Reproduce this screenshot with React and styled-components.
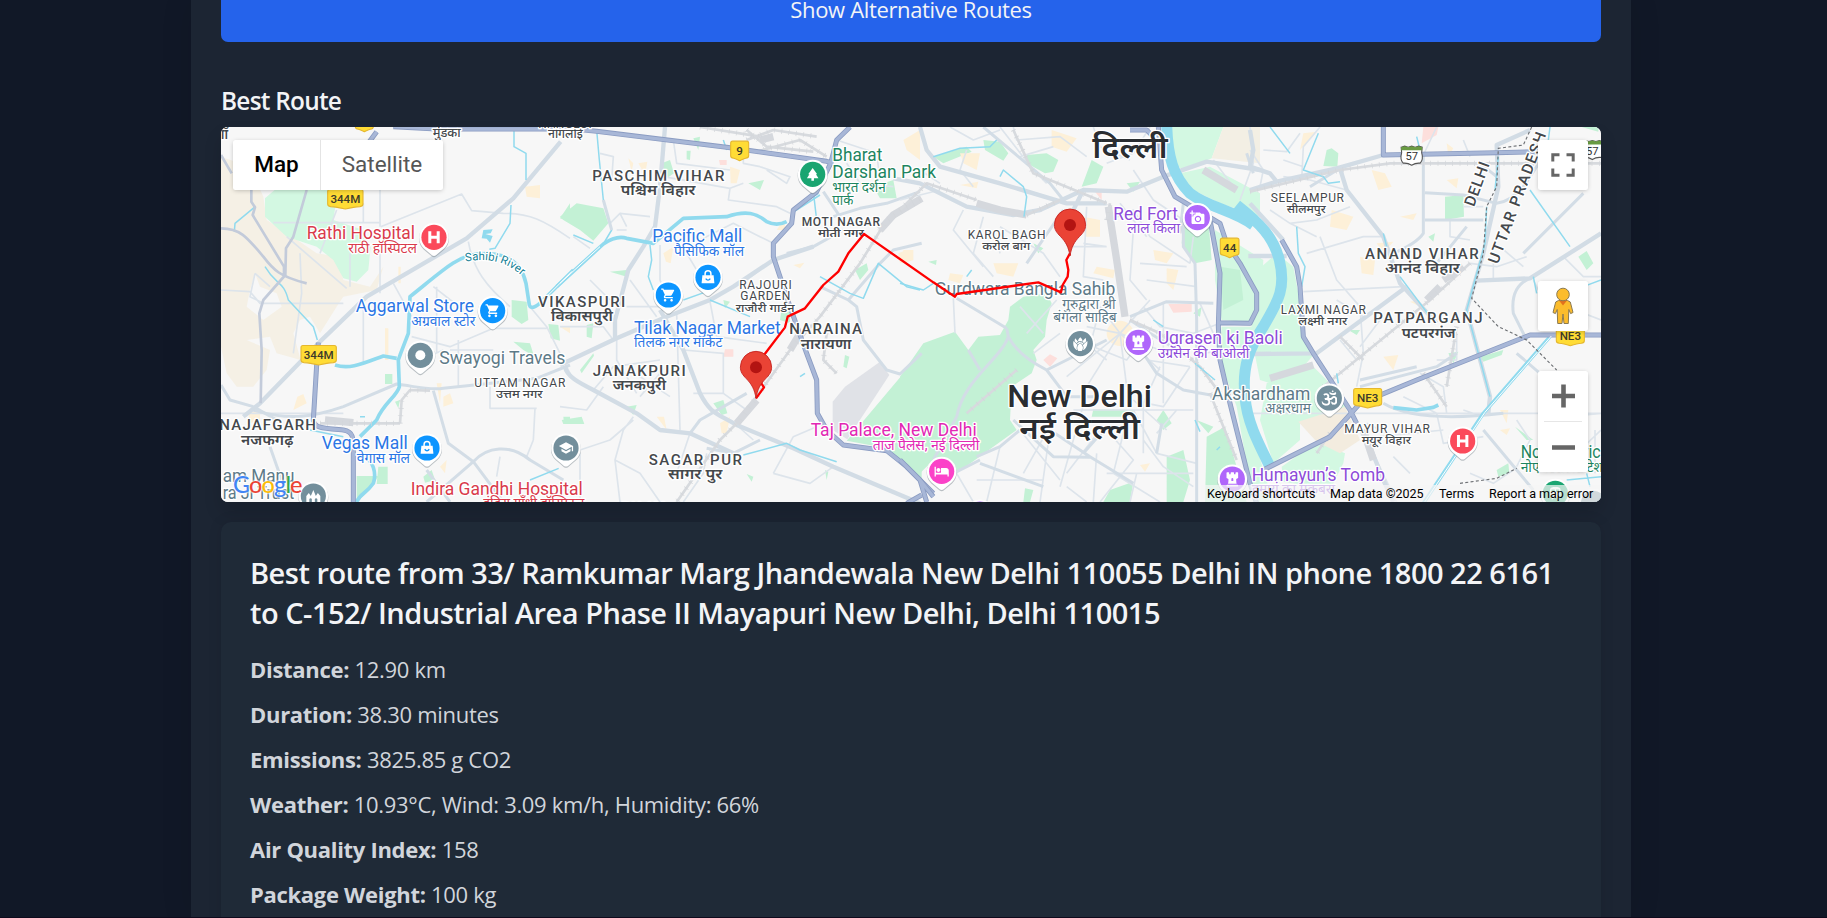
import React from 'react';
import styled, { createGlobalStyle, css } from 'styled-components';
import { MdShoppingCart, MdSchool, MdPark, MdHotel, MdAddAPhoto, MdTrain } from 'react-icons/md';
import { FaChessRook, FaOm } from 'react-icons/fa';
import { GiLotus } from 'react-icons/gi';

const GlobalStyle = createGlobalStyle`
  * { box-sizing: border-box; }
  html, body { margin: 0; padding: 0; background: #111827; }
  body { overflow: hidden; font-family: 'Open Sans', 'Noto Sans', sans-serif; }
  h2, h3, p { margin: 0; }
`;

const Page = styled.div`
  height: 918px;
  overflow: hidden;
  display: flex;
  justify-content: center;
  background: #111827;
  border-bottom: 1px solid #0e0a1c;
  padding-right: 5px;
`;

const Panel = styled.main`
  width: 1440px;
  padding: 0 30px;
  background: #1c2533;
  box-shadow: 0 0 30px rgba(0, 0, 0, 0.1);
  display: flex;
  flex-direction: column;
`;

const RouteButton = styled.button`
  flex: none;
  height: 65px;
  margin: -23px 0 40px;
  padding: 15px;
  border: 0;
  border-radius: 7px;
  background: #2563eb;
  color: #f3f4f6;
  font: 400 22px/35px 'Open Sans', sans-serif;
  letter-spacing: -0.35px;
`;

const SectionTitle = styled.h3`
  font-size: 24.4px;
  font-weight: 650;
  line-height: 35px;
  letter-spacing: -0.75px;
  color: #f3f4f6;
  padding-top: 1px;
  margin-bottom: 9px;
`;

const MapFrame = styled.section`
  position: relative;
  flex: none;
  height: 375px;
  border-radius: 7px;
  overflow: hidden;
  background: #f7f7f7;
`;

const MapShadow = styled.div`
  flex: none;
  border-radius: 7px;
  box-shadow: 0 10px 18px rgba(0, 0, 0, 0.14);
  margin-bottom: 20px;
`;

const MapArt = styled.svg`
  display: block;
  width: 1380px;
  height: 375px;
`;

const MapLabel = styled.text`
  font-family: Roboto, 'Noto Sans Devanagari', 'Noto Sans', sans-serif;
  font-size: ${(p) => p.$size}px;
  font-weight: ${(p) => p.$weight};
  fill: ${(p) => p.$color};
  stroke: #fff;
  stroke-width: 2.6px;
  stroke-linejoin: round;
  paint-order: stroke;
`;

const control = css`
  background: #fff;
  border-radius: 2.5px;
  box-shadow: 0 1px 5px -1px rgba(0, 0, 0, 0.3);
`;

const TypeSwitch = styled.div`
  ${control}
  position: absolute;
  left: 12px;
  top: 13px;
  height: 50px;
  width: 210px;
  display: flex;
`;

const TypeButton = styled.button`
  width: ${(p) => p.$width}px;
  border: 0;
  border-left: ${(p) => (p.$divided ? '1px solid #e4e4e4' : '0')};
  background: none;
  padding: 0 0 2px;
  font-family: Roboto, sans-serif;
  font-size: 22.5px;
  line-height: 48px;
  font-weight: ${(p) => (p.$active ? 500 : 400)};
  color: ${(p) => (p.$active ? '#000' : '#565656')};
`;

const ControlColumn = styled.div`
  position: absolute;
  right: 13px;
  top: 13px;
  width: 50px;
  display: flex;
  flex-direction: column;
`;

const SquareControl = styled.button`
  ${control}
  width: 50px;
  height: ${(p) => p.$height || 50}px;
  margin-bottom: ${(p) => p.$gap || 0}px;
  border: 0;
  padding: 0;
  display: flex;
  align-items: center;
  justify-content: center;
`;

const Attribution = styled.div`
  position: absolute;
  right: 0;
  bottom: 0;
  height: 17px;
  display: flex;
  gap: 15px;
  padding: 0 8px 0 6px;
  background: rgba(245, 245, 245, 0.72);
  font: 400 12.5px/17px Roboto, sans-serif;
  color: #000;
  white-space: nowrap;
`;

const AttributionItem = styled.span`
  width: ${(p) => p.$width}px;
`;

const Logo = styled.div`
  position: absolute;
  left: 12px;
  bottom: 3px;
  font: 500 23.5px/30px 'Lato', sans-serif;
  letter-spacing: -0.9px;
  text-shadow: 0 0 2px #fff, 0 0 2px #fff, 0 0 2px #fff;
`;

const LogoLetter = styled.span`
  color: ${(p) => p.$color};
`;

const Details = styled.article`
  flex: none;
  height: 480px;
  padding: 30px 29px;
  border-radius: 10px;
  background: #1f2a37;
  box-shadow: 0 0 14px rgba(0, 0, 0, 0.1);
`;

const DetailsTitle = styled.h2`
  font-size: 29px;
  font-weight: 640;
  line-height: 40px;
  letter-spacing: -0.5px;
  color: #f3f4f6;
  padding-top: 1px;
  margin-bottom: 19px;
  white-space: nowrap;
`;

const DetailRow = styled.p`
  font-size: 22px;
  line-height: 35px;
  letter-spacing: -0.32px;
  color: #d1d5db;
  margin-bottom: 10px;
  strong { font-weight: 700; letter-spacing: -0.3px; }
`;

/* Horizontal origin of each map tile, in map pixels; tile units are thirds of a pixel. */
const TILES = { a: -11, b: 339, c: 679, d: 1029 };
const px = (tile, x) => TILES[tile] + x / 3;
const py = (y) => -7 + y / 3;

const KINDS = {
  water: ['#90daee', 11],
  river: ['#90daee', 33],
  creek: ['#90daee', 4.5],
  lane: ['#dde4eb', 5],
  road: ['#d3dde6', 9],
  avenue: ['#d2dce5', 13],
  rail: ['#d7dade', 8],
  railwide: ['#d5d8dd', 22],
  minor: ['#c3cbda', 8],
};

const AREAS = [
  ['a', '#f5f0e5', 'M33,110L120,140 160,230 170,300 240,345 320,400 385,410 400,480 480,500 520,440 500,510 400,530 380,560 330,640 300,590 270,600 250,640 272,720 200,700 180,650 110,660 180,690 170,750 130,800 80,800 50,760 33,680Z'],
  ['a', '#f7f7f7', 'M135,460L150,500 200,520 215,560 160,600 110,560 120,510Z'],
  ['a', '#d3f8e2', 'M165,235L200,205H360L380,235 370,300 460,330 482,380 475,450 440,485 400,475 370,420 320,380 230,350 165,290Z'],
  ['a', '#c3f1d5', 'M905,540L950,545 955,600 935,612 905,590ZM1015,612L1045,615 1050,662 1022,655ZM910,665L960,670 972,708 940,690ZM525,762H547V792H525ZM1050,295L1080,250V305ZM505,1040H533V1092H500ZM440,1068H505L480,1110 440,1146ZM640,1070L665,1050 675,1080 645,1088ZM1060,890H1080V910H1062ZM555,845L570,840 565,865Z'],
  ['a', '#fdf0d8', 'M945,200L990,195V235L950,230ZM262,830L280,822 290,850 250,870ZM610,715L650,700 655,735 615,745ZM700,830L720,820 730,850 700,860ZM525,625H535V720H525ZM690,1040L710,1020 705,1060ZM115,880L150,870 150,900 120,910ZM565,440H572V490H565ZM680,790L695,790 690,850Z'],
  ['b', '#c3f1d5', 'M0,290L50,250 130,265 145,310 100,362 60,330 10,300ZM150,455L200,450V470ZM80,615L100,610 95,655 80,650ZM885,450L920,430 925,450 900,480ZM460,850L490,840 502,880 485,885ZM855,705L868,710 860,745 850,740ZM400,55L420,50 415,90ZM305,130L330,120 342,160 320,175ZM565,190L612,180 600,210ZM5,900L65,890 73,912 10,912ZM665,565H690V610L660,600ZM380,92L392,92 390,120 380,118ZM795,1050L805,1055 800,1080ZM560,1062L580,1070 575,1085ZM200,860L230,855 220,885ZM60,750L100,700 102,707 65,760ZM940,200L1000,180 1010,235 960,235ZM490,540L510,545 495,565Z'],
  ['b', '#c3f1d5', 'M1085,695L860,962 980,985 1085,1085Z'],
  ['b', '#e0e2e7', 'M818,845L855,800 960,725 988,765 862,958 818,930Z'],
  ['b', '#fdf0d8', 'M235,130L262,125 255,165ZM310,400L340,380 332,430 318,425ZM510,140L540,150 530,190 512,190ZM700,435L733,428 720,445ZM290,890L312,890 320,930ZM480,910L510,890 500,940 485,940ZM325,730L355,735 350,750ZM1030,60L1080,30V120L1040,90ZM1015,400L1040,390 1060,420 1020,430ZM205,115L220,130 215,155ZM0,620L30,620 30,640ZM650,330L670,300 680,330Z'],
  ['b', '#fddfdc', 'M495,688H520V710H490ZM477,120H500V135H480Z'],
  ['c', '#c3f1d5', 'M0,770L70,670 165,635 205,690 235,650 300,645 325,600 330,560 370,530 440,520 455,550 440,600 435,650 400,690 410,720 395,760 335,800 330,900 350,930 280,980 170,1060 100,1020 60,1060 0,1010Z'],
  ['c', '#c3f1d5', 'M100,110L200,80 215,95 130,130ZM250,60L300,65 325,100 310,122 255,90ZM380,105L440,100 475,120 460,155 435,160 380,130ZM575,120L610,140 590,190 545,200ZM680,190L720,185 700,215ZM400,370L430,385 415,400ZM85,425L110,420 108,435ZM850,310L925,300 935,420 885,430 845,370ZM800,1010L850,990 870,1080 850,1146H800ZM630,1110L700,1085 690,1146H610ZM375,1105L400,1110 390,1146H370ZM920,950L975,920 1010,1040 1040,1146H915ZM580,868L700,870V890H575ZM770,900L790,870 815,910 790,930ZM880,580L905,560 900,590ZM890,900L940,920 925,940Z'],
  ['c', '#d3f8e2', 'M810,21H970L935,115 850,150 820,130ZM840,160L930,140 1080,220V290L960,250 880,210ZM945,330L1090,420 1080,610 965,600 945,480ZM965,620L1060,620 1040,700 1045,900 1075,1000 1120,1146H1060L1010,860 960,720Z'],
  ['c', '#c3f1d5', 'M960,440L1020,450 1030,540 970,570Z'],
  ['c', '#f3efe4', 'M970,21H1080V130L935,115Z'],
  ['c', '#fdf0d8', 'M455,30L530,55 500,95 455,80ZM180,100L240,100 230,150 190,130ZM550,290L600,300 600,350 555,350ZM280,430L355,430 340,470 290,460ZM760,390L820,400 800,430 765,420ZM800,445L835,450 820,510 800,490ZM150,460L190,465 180,490 145,480ZM620,640A40,38 0 1 1 700,640A40,38 0 1 1 620,640ZM720,1035L750,1030 735,1055ZM10,390L40,390 40,420 5,430ZM590,440L645,450 640,475 580,460ZM180,195L235,185 230,205Z'],
  ['c', '#fddfdc', 'M430,720L450,703 472,715 450,740ZM805,552H875V575L820,578ZM585,215H605V240Z'],
  ['d', '#d3f8e2', 'M0,470L80,400 130,440 145,520 160,640 195,700 160,740 60,790 30,780 10,680 0,560Z'],
  ['d', '#d3f8e2', 'M50,790L190,740 240,790 290,860 270,890 150,905 150,960 70,1030 30,900ZM95,1040L200,965 285,1000 280,1030 240,1110 100,1085Z'],
  ['d', '#f3ecdf', 'M145,905L285,860 330,960 270,1000 200,965Z'],
  ['d', '#c3f1d5', 'M230,90L245,85 265,100 262,140 220,138ZM585,230L640,225 642,290 585,300ZM535,350L555,340 550,365ZM985,410L1010,393 1030,430 1010,450ZM690,710L760,690 755,705 700,725ZM740,1050L775,1030 778,1060 745,1070ZM595,700L625,695 610,730ZM995,21H1045V35ZM795,920L850,960 830,960ZM295,630L330,630 320,645Z'],
  ['d', '#fdf0d8', 'M365,150L405,160 425,200 385,210ZM245,270L310,290 290,330 240,320ZM330,410L375,420 370,465 335,460ZM380,370L430,365 400,400ZM450,290L500,280 490,300ZM400,710L445,705 430,750ZM590,180L625,175 620,205ZM750,870L775,870 770,910ZM160,40L200,35 150,90ZM590,70L610,85 595,110ZM480,545L510,540 500,555ZM750,930L780,925 770,945Z'],
  ['d', '#fddfdc', 'M520,21H565L560,45 515,70Z'],
];

const LINES = [
  ['a', 'lane', 'M190,308H510M510,210V320M460,250V305M512,320L755,222 785,272 880,280C960,280 1000,300 1080,355M550,490L605,590M460,550V730M775,365C790,450 830,500 900,560M670,500L760,570M680,500V700M840,800V865H980M975,865L970,960M510,400V520M420,400V500M33,510L120,515 150,550H400M230,350L410,505M270,400L275,520 250,700M135,460L180,500M135,460L120,530 160,550M605,650L720,680 850,625 1010,625M745,660V800M960,560L1010,620 1080,760M720,690H850M870,1010L860,1070M970,960L950,1010M630,720L700,690M380,270L330,400M33,880H400'],
  ['a', 'road', 'M180,980L215,1080M670,812L715,970 790,1025 880,1146M790,1025C830,980 900,970 960,1020L1060,1080M790,1025L650,1146M650,1050L720,1146M33,795L60,840 130,860M130,860L200,900'],
  ['a', 'road', 'M130,870C230,900 300,895 400,860L560,792C620,800 660,812 700,805L980,775 1080,735'],
  ['a', 'avenue', 'M1052,65L910,235 770,355 470,530 330,665 150,850 100,890'],
  ['a', 'rail', 'M330,910L570,910 M570,910L575,840 600,810 660,812'],
  ['a', 'railwide', 'M345,900L430,908'],
  ['a', 'creek', 'M133,262L75,310 73,335M165,440C200,500 220,480 235,540L310,620 322,660M912,21V80L948,100V180M903,255L900,310 855,385 838,388M1046,1045L960,1080M450,890H465M300,930L400,950'],
  ['a', 'water', 'M1090,450L1000,540Q965,575 958,555L948,490C930,410 870,395 800,402C740,410 700,450 600,530L595,640 572,700 565,720 568,800C560,830 520,850 500,900L450,950M560,715L520,708C460,730 420,750 375,735M460,1010C490,1020 500,1060 490,1090C470,1120 450,1120 440,1146'],
  ['a', 'minor', 'M33,105L65,160M124,210V245L135,262 128,285 222,440V465M33,325C90,325 110,350 160,410C190,450 210,470 290,490M290,210L250,350 228,385 226,465 160,540 148,580 155,690 152,850'],
  ['b', 'lane', 'M120,100L160,110 155,180M200,330L170,330M40,350L90,385M180,280L270,290M150,310L180,280 200,320M310,170L510,205 550,190M340,60L350,130 510,150M510,205L505,240 650,260 690,280M420,360L520,310 600,350 640,370M300,375V480L330,560M380,400L440,500M0,620L130,620 160,660M170,655V720L230,820M100,810L160,740 300,720M370,690L490,700V820L560,870M490,820H400M350,580L360,930M450,545L470,650 620,670M640,420L560,480M210,480L290,590M200,560H300M640,1060L700,950 770,920M640,1060L750,1090 820,1040M165,1020L240,1060 300,1146M220,890L190,930 165,1020 180,1146M390,940L350,1060M600,140L690,170 680,190 620,150M550,90V130L600,140M210,750L330,830M240,830L300,760M90,480L150,540M0,860L80,870 130,800M60,990L150,960 220,900M440,1000L430,1060 370,1146M530,915L580,960M830,60L950,100 960,180M60,1000L60,1146M0,1110H60M860,130L900,190 1000,200'],
  ['b', 'road', 'M560,820L420,900 390,940M600,960L520,1000 440,985M1085,700L1020,762 980,750 910,660 890,560 865,540 780,500M865,540L960,430 1000,390 1085,370M790,215L840,290M820,290L900,265 980,250 1080,215M680,400L760,380 850,330'],
  ['b', 'avenue', 'M315,21L300,200 285,320 250,380 205,450 165,600V655M0,735L170,655 320,590 450,540 520,500 640,420 760,380M15,740C20,770 60,790 100,810L230,880 300,930 390,940 520,1000M300,570L370,690 420,820C450,880 470,880 530,915L700,985 820,1040 1080,1150'],
  ['b', 'rail', 'M1080,240L980,300 900,430 780,590 690,690 540,900 480,960 350,1146M560,30L620,80 760,95M560,60L640,30 770,50M590,95L720,60 800,110M420,21L600,50M800,640L790,720 830,760'],
  ['b', 'railwide', 'M1085,235L1000,285 960,330M590,840L530,910M720,640L690,690M600,60L640,50'],
  ['b', 'creek', 'M270,375L275,420 265,470 280,510M370,540L440,515M450,540L570,590M780,470L870,520 910,535 955,430 1040,500 1080,510M550,1005L680,970 720,990 830,1025M100,370L40,345M760,215L770,300M490,60L500,90M720,770L735,760'],
  ['b', 'creek', 'M110,30L118,120 130,240 155,330 130,372'],
  ['b', 'water', 'M-10,500L130,372Q170,345 200,355L280,370 370,295 500,290C560,270 590,280 620,305Q650,320 680,305'],
  ['b', 'road', 'M130,240L155,330'],
  ['b', 'creek', 'M700,276L780,225M700,268L775,220'],
  ['c', 'lane', 'M300,21L400,150 440,190M360,110L460,80M340,21L350,60 480,50 560,110M200,90L180,150 220,200M150,21L220,60 300,30M550,370L620,380M560,260L550,470 610,480M510,380H620M250,290L220,400 280,470M300,320L430,400 480,470M290,350L300,400M190,270L160,330 250,440M0,240L120,210M60,150L120,190M630,300L700,270 750,350 870,430M660,250L740,350M700,330L690,480 740,540M720,430L860,440M740,480L890,500M660,640L500,770M660,640L560,800M660,640L600,560M660,640L750,540M660,640L780,750M660,640L800,700M660,640L560,620M660,640L680,800M580,680L680,720 740,640M590,600L570,680 620,720M730,560L780,620 880,640M790,545V850M740,720L870,740M480,640L400,700M160,535L165,640M360,560L430,640M520,870H880M700,840L800,930M780,740L730,850V1000M740,850L790,860 870,740M770,940L830,870M620,930L700,1020 600,1146M560,820L480,1100M450,930L420,1146M590,1000L580,1146M360,930L480,1080M460,900L370,1060M700,870L770,1000 890,1030M600,930L500,1060M730,960L790,1040 880,1100M620,1060H880M640,1060L780,1146M230,1080H430M300,980L260,1146M170,1060L220,1146M680,900L640,1060M500,1100L560,1146M710,1060L690,1146M880,640L960,610M900,550L940,640M870,430L880,350M940,120L1000,200M1050,21L1060,130 1020,240M900,700L1000,690M580,21L600,80 690,120M700,150L760,240 850,300M380,640L470,540M750,21L700,100 620,130'],
  ['c', 'road', 'M320,625L325,650C300,720 190,780 170,890M205,690L240,750M320,625L170,535M325,650C350,700 400,730 440,750L500,830M240,1030L430,1100M450,930L570,1010 700,1090M785,910L770,1000M890,600V1146M230,1010L300,980 360,930M160,1060L240,1020M250,21L450,190 490,240M340,900L460,1010 570,1012M550,1000L620,920M690,600L750,640 880,720M690,590L800,545 940,550M440,750L620,660M170,890L100,1020M690,640L770,760 850,810 960,830M850,300L850,380 885,430 890,600M490,270L380,430M500,830H600M840,340L850,250'],
  ['c', 'avenue', 'M60,21L80,90 120,140 300,190 500,250 620,250M-20,175L60,190 200,260 340,285 420,270 550,210 520,270M550,210L680,215 790,170 920,125 1080,150'],
  ['c', 'railwide', 'M230,250L300,270 380,285M625,260L650,420 675,590M910,150L960,180 1010,210'],
  ['c', 'rail', 'M0,270L80,190 230,240M340,30L400,160 620,250M690,600L780,640 900,740 960,820M620,300L630,250M380,285L480,240M350,750L200,880M930,820L1010,1020'],
  ['c', 'creek', 'M100,110L180,85 270,80 290,60M300,170L310,150 370,200 380,230 372,290M0,490L70,510 100,490M885,730L945,780M885,900L900,935M200,470L215,450M760,600L790,620M950,990L960,980'],
  ['c', 'river', 'M800,10C802,110 820,170 870,220C930,265 1000,270 1060,315'],
  ['d', 'lane', 'M0,90L40,150 30,200M40,90L110,95 150,40M210,21L160,80 155,180M100,120L160,140M290,210L180,180 100,170M60,270L120,310 200,300 300,260M120,310L200,350M170,400L340,350 400,350M210,350L260,480 330,560M160,515L460,500M330,560L340,700 320,800M340,590L260,540M270,660L320,720M390,600L330,680M620,640V720L560,720M600,300V350L660,360M640,260L700,260M730,430V480M660,430L740,440 830,410M560,21L520,105M640,60L660,110M790,480L680,480M1053,600L950,560M940,410L1000,470 1053,470M890,560L850,480M510,760L580,800 590,880M460,830L560,880 580,970 700,950M390,950L580,930M430,1010L480,1060M370,1000L440,1146M950,890L1053,880M980,1000L1053,930M1035,930V1060M800,900L840,960 800,1040M700,890L640,870M0,880H1053M350,910L450,960M660,1060L730,1090 790,1050M750,380L820,440'],
  ['d', 'road', 'M520,105V340Q500,370 430,400M525,218L640,225 740,250Q780,245 820,200L880,110M525,300H700M330,800L560,740 620,700M330,780L500,740M400,850Q500,910 760,880M700,930L850,1110M840,475Q780,500 790,580L830,660M800,700L870,760M270,145L180,200M-10,100L10,160M820,400L1000,220M740,170L690,130M650,320L560,430'],
  ['d', 'avenue', 'M0,30L10,90 0,140 60,160 80,185M0,210L80,185 260,145 400,105M270,145L290,210 400,350 450,490 560,610M-5,408H110M470,500L200,700 0,702M840,30L740,75 745,200 700,400 650,570 720,830 715,880M680,482L840,475 1053,340M340,930L400,1080 430,1146M0,250L100,360'],
  ['d', 'rail', 'M0,215L270,150 420,130H1053M660,430L540,540 220,800M520,760L590,860M240,940L200,1000M270,650L340,720M620,620L590,800'],
  ['d', 'railwide', 'M60,775L190,735M640,440L580,480M570,500L530,540M340,930L370,1020'],
  ['d', 'creek', 'M205,40L160,150 220,170 235,190 270,185M140,320L145,400 165,440 155,500M400,340L410,380M840,210L960,380M710,260L705,370 650,570 720,830M260,760L265,790M1053,480L1000,500M850,470L860,520M745,110L735,210M60,21L120,100M450,470L540,590M900,21L895,60M950,1080L1053,1070M1010,1060L1020,1100M500,50L510,90'],
  ['d', 'river', 'M-40,255C30,310 70,350 88,420C110,510 80,550 40,620C0,680 -25,740 -15,830C-10,900 20,960 60,1040'],
  ['d', 'water', 'M900,650L700,880 520,1150M430,863L500,870 550,862 565,855'],
];

const HIGHWAYS = [
  ['a', 'M500,35L478,65M325,668L320,735 310,900C312,925 340,925 400,930C430,935 430,950 430,1000V1150M550,20L680,27 1080,27'],
  ['b', 'M20,25L110,34 500,82 800,124 820,130M870,21L830,60 812,130 770,215 700,270 695,310 640,370V410L690,560 740,700 770,780 772,880 800,930 850,975 980,992 1040,1040 1120,1120M1085,1125L1040,1150'],
  ['c', 'M0,1020L60,1080 100,1130M60,1080L80,1146M775,21L785,150 825,230 960,310 980,370 1020,430 1070,520V570L1050,610 960,608M930,300L960,460 955,620 960,720 990,850 1050,1090 1070,1150M690,30L740,30 760,50'],
  ['d', 'M95,360L140,440 150,500 160,650 190,700 300,870 320,910M40,1050L240,950 330,850 500,780 840,645H1053M400,21V105L740,98 870,95'],
];

const BORDERS = 'M845,21L820,75 745,85 740,200 710,260 700,400 665,535 745,620 830,660 920,750M630,1090L740,1075 800,1045';

const C = {
  red: '#d93a4b', blue: '#2b76e5', slate: '#5d7a88', purple: '#8d4bd9',
  green: '#1d8560', pink: '#e228b4', area: '#44484c', dark: '#2a2d31', teal: '#128095',
};

/* tile, x, baseline, width, text, color, size, weight */
const LABELS = [
  ['a', 290, 357, 325, 'Rathi Hospital', C.red, 17.5, 400],
  ['a', 415, 398, 206, 'राठी हॉस्पिटल', C.red, 14, 400],
  ['a', 437, 576, 355, 'Aggarwal Store', C.blue, 17.5, 400],
  ['a', 604, 617, 192, 'अग्रवाल स्टोर', C.blue, 14, 400],
  ['a', 688, 732, 378, 'Swayogi Travels', C.slate, 17.5, 400],
  ['a', 793, 801, 273, 'UTTAM NAGAR', C.area, 12, 400],
  ['a', 858, 833, 140, 'उत्तम नगर', C.area, 11.5, 500],
  ['a', 28, 930, 290, 'NAJAFGARH', C.area, 15, 500],
  ['a', 93, 974, 157, 'नजफगढ़', C.area, 14.5, 600],
  ['a', 335, 988, 258, 'Vegas Mall', C.blue, 17.5, 400],
  ['a', 440, 1028, 160, 'वेगास मॉल', C.blue, 14, 400],
  ['a', 602, 1124, 516, 'Indira Gandhi Hospital', C.red, 17.5, 400],
  ['a', 820, 1164, 303, 'इंदिरा गाँधी हॉस्पिटल', C.red, 14, 400],
  ['a', 38, 1085, 215, 'am Manu', C.slate, 17.5, 400],
  ['a', 38, 1137, 215, 'ra Ji Trust', C.slate, 17.5, 400],
  ['a', 668, 52, 84, 'मुंडका', C.area, 12.5, 500],
  ['a', 1014, 55, 104, 'नांगलोई', C.area, 12.5, 500],
  ['a', 985, 24, 160, 'NANGLOI', C.area, 12, 400],
  ['a', 984, 561, 262, 'VIKASPURI', C.area, 15, 500],
  ['a', 1023, 603, 186, 'विकासपुरी', C.area, 14.5, 600],
  ['a', 20, 58, 34, 'गाँ', C.area, 14.5, 600],
  ['b', 97, 182, 396, 'PASCHIM VIHAR', C.area, 15, 500],
  ['b', 182, 225, 224, 'पश्चिम विहार', C.area, 14.5, 600],
  ['b', 277, 366, 270, 'Pacific Mall', C.blue, 17.5, 400],
  ['b', 342, 408, 210, 'पैसिफिक मॉल', C.blue, 14, 400],
  ['b', 538, 507, 157, 'RAJOURI', C.area, 12, 400],
  ['b', 541, 541, 150, 'GARDEN', C.area, 12, 400],
  ['b', 527, 575, 177, 'राजौरी गार्डन', C.area, 11.5, 500],
  ['b', 222, 641, 440, 'Tilak Nagar Market', C.blue, 17.5, 400],
  ['b', 222, 682, 265, 'तिलक नगर मार्केट', C.blue, 14, 400],
  ['b', 688, 643, 218, 'NARAINA', C.area, 15, 500],
  ['b', 722, 688, 152, 'नारायणा', C.area, 14.5, 600],
  ['b', 98, 769, 279, 'JANAKPURI', C.area, 15, 500],
  ['b', 158, 811, 160, 'जनकपुरी', C.area, 14.5, 600],
  ['b', 266, 1034, 280, 'SAGAR PUR', C.area, 15, 500],
  ['b', 324, 1076, 163, 'सागर पुर', C.area, 14.5, 600],
  ['b', 185, 1174, 130, 'PALAM', C.area, 13, 500],
  ['b', 725, 317, 235, 'MOTI NAGAR', C.area, 12, 500],
  ['b', 774, 352, 138, 'मोती नगर', C.area, 11.5, 600],
  ['b', 817, 122, 150, 'Bharat', C.green, 17.5, 400],
  ['b', 817, 175, 311, 'Darshan Park', C.green, 17.5, 400],
  ['b', 817, 217, 160, 'भारत दर्शन', C.green, 14, 400],
  ['b', 817, 256, 63, 'पार्क', C.green, 14, 400],
  ['b', 752, 948, 498, 'Taj Palace, New Delhi', C.pink, 17.5, 400],
  ['b', 938, 990, 320, 'ताज पैलेस, नई दिल्ली', C.pink, 14, 400],
  ['c', 577, 115, 226, 'दिल्ली', C.dark, 30, 600],
  ['c', 640, 299, 194, 'Red Fort', C.purple, 17.5, 400],
  ['c', 682, 340, 158, 'लाल किला', C.purple, 14, 400],
  ['c', 203, 358, 234, 'KAROL BAGH', C.area, 12, 400],
  ['c', 247, 391, 144, 'करोल बाग', C.area, 11.5, 500],
  ['c', 104, 524, 542, 'Gurdwara Bangla Sahib', C.slate, 17.5, 400],
  ['c', 487, 567, 160, 'गुरुद्वारा श्री', C.slate, 14, 400],
  ['c', 460, 607, 190, 'बंगला साहिब', C.slate, 14, 400],
  ['c', 773, 673, 375, 'Ugrasen ki Baoli', C.purple, 17.5, 400],
  ['c', 773, 714, 275, 'उग्रसेन की बाओली', C.purple, 14, 400],
  ['c', 322, 862, 434, 'New Delhi', C.dark, 31, 500],
  ['c', 358, 956, 362, 'नई दिल्ली', C.dark, 30, 600],
  ['c', 936, 839, 295, 'Akshardham', C.slate, 17.5, 400],
  ['d', 45, 880, 138, 'अक्षरधाम', C.slate, 14, 400],
  ['d', 5, 1082, 400, 'Humayun’s Tomb', C.purple, 17.5, 400],
  ['d', 5, 1121, 250, 'हुमायूं का मकबरा', C.purple, 14, 400],
  ['d', 62, 246, 220, 'SEELAMPUR', C.area, 12, 400],
  ['d', 110, 279, 117, 'सीलमपुर', C.area, 11.5, 500],
  ['d', 345, 417, 341, 'ANAND VIHAR', C.area, 15, 500],
  ['d', 405, 459, 224, 'आनंद विहार', C.area, 14.5, 600],
  ['d', 92, 582, 256, 'LAXMI NAGAR', C.area, 12, 400],
  ['d', 145, 614, 147, 'लक्ष्मी नगर', C.area, 11.5, 500],
  ['d', 370, 610, 328, 'PATPARGANJ', C.area, 15, 500],
  ['d', 455, 653, 162, 'पटपरगंज', C.area, 14.5, 600],
  ['d', 283, 939, 257, 'MAYUR VIHAR', C.area, 12, 400],
  ['d', 335, 972, 148, 'मयूर विहार', C.area, 11.5, 500],
  ['d', 812, 1015, 240, 'Noida Civic', C.green, 17.5, 400],
  ['d', 812, 1055, 270, 'नोएडा सिटी स्टेशन', C.green, 14, 400],
];

const PINS = [
  ['a', 672, 352, '#fb4a5b', 'H'],
  ['a', 848, 572, '#0c95ff', MdShoppingCart],
  ['a', 631, 706, '#738f9c', 'dot'],
  ['a', 651, 984, '#0c95ff', 'bag'],
  ['a', 310, 1128, '#738f9c', 'arch'],
  ['b', 758, 163, '#1aa571', MdPark],
  ['b', 444, 472, '#0c95ff', 'bag'],
  ['b', 325, 525, '#0c95ff', MdShoppingCart],
  ['b', 18, 984, '#738f9c', MdSchool],
  ['c', 892, 293, '#b066fb', MdAddAPhoto],
  ['c', 541, 671, '#738f9c', GiLotus],
  ['c', 715, 667, '#b066fb', FaChessRook],
  ['c', 125, 1054, '#fb42c8', MdHotel],
  ['c', 997, 1077, '#b066fb', FaChessRook],
  ['c', 240, 1182, '#b066fb', 'none'],
  ['d', 238, 834, '#738f9c', FaOm],
  ['d', 638, 963, '#fb4a5b', 'H'],
  ['d', 916, 1120, '#1aa571', MdTrain],
  ['d', 1030, 1150, '#738f9c', 'none'],
];

const SHIELDS = [
  ['a', 406, 237, 106, '344M'], ['a', 326, 705, 106, '344M'], ['a', 463, 5, 54, '9'],
  ['b', 539, 92, 54, '9'], ['c', 989, 383, 56, '44'], ['d', 353, 834, 84, 'NE3'], ['d', 961, 647, 84, 'NE3'],
];

function Label({ item }) {
  const [tile, x, y, w, text, color, size, weight] = item;
  return (
    <MapLabel x={px(tile, x)} y={py(y)} textLength={w / 3}
      lengthAdjust={size === 12 || size === 15 || size === 13 ? 'spacing' : 'spacingAndGlyphs'}
      $size={size} $weight={weight} $color={color}>{text}</MapLabel>
  );
}

function PoiPin({ tile, x, y, color, icon: Icon }) {
  const special = typeof Icon === 'string';
  return (
    <g transform={`translate(${px(tile, x)} ${py(y)})`}>
      <path d="M-10.4,11.2 A15,15 0 1 1 10.4,11.2 L2,18.3 Q0,19.6 -2,18.3Z" fill="#7c8790" opacity=".5" transform="translate(0 .9)" />
      <path d="M-10.2,10.9 A14.8,14.8 0 1 1 10.2,10.9 L2,18 Q0,19.2 -2,18Z" fill="#fff" />
      <circle r="12.6" fill={color} />
      {!special && <Icon x={-7.75} y={-7.75} size={15.5} color="#fff" />}
      {Icon === 'dot' && <circle r="5" fill="#fff" />}
      {Icon === 'H' && <path d="M-4.2-6V6M4.2-6V6M-4.2 0H4.2" stroke="#fff" strokeWidth="3" />}
      {Icon === 'bag' && (
        <>
          <path d="M-5.6,-2.2H5.6L6.4,5.8H-6.4Z" fill="#fff" />
          <path d="M-2.9,-1.5V-3.6A2.9,2.9 0 0 1 2.9,-3.6V-1.5" fill="none" stroke="#fff" strokeWidth="1.5" />
          <path d="M-2.3,1.3Q0,4.2 2.3,1.3" fill="none" stroke={color} strokeWidth="1.4" />
        </>
      )}
      {Icon === 'arch' && <path d="M-7 7V0L-4.5-3-2.5 0 0-6 2.5 0 4.5-3 7 0V7H4V3A1.5 1.5 0 0 0 1.5 3V7H-1.5V3A1.5 1.5 0 0 0-4 3V7Z" fill="#fff" />}
    </g>
  );
}

function Shield({ item }) {
  const [tile, x, y, w, text] = item;
  const h = w / 6;
  return (
    <g transform={`translate(${px(tile, x)} ${py(y)})`}>
      <path d={`M${-h + 2},-9.5H${h - 2}Q${h},-9.5 ${h},-7.5V5Q${h},7.2 ${h - 3},7.6Q${h / 2},8 0,10Q${-h / 2},8 ${-h + 3},7.6Q${-h},7.2 ${-h},5V-7.5Q${-h},-9.5 ${-h + 2},-9.5Z`} fill="#ffdc35" stroke="#e5b72f" strokeWidth="1.1" />
      {y > 20 && <text y="4.2" textAnchor="middle" fontFamily="Roboto" fontWeight="500" fontSize="11.6" fill="#3c3a2b">{text}</text>}
    </g>
  );
}

function StateRoute({ x, y }) {
  return (
    <g transform={`translate(${px('d', x)} ${py(y)})`}>
      <path d="M-10.5-8.5L-7-9.5-3.5-8.5 0-9.5 3.5-8.5 7-9.5 10.5-8.5 10-3Q12 4 8.5 7.5 4 7 0 9.5-4 7-8.5 7.5-12 4-10-3Z" fill="#fff" stroke="#555" strokeWidth="1.1" />
      <path d="M-10.5-8.5L-7-9.5-3.5-8.5 0-9.5 3.5-8.5 7-9.5 10.5-8.5V-5.5H-10.5Z" fill="#699b42" />
      <text y="4.8" textAnchor="middle" fontFamily="Roboto" fontSize="11.2" fill="#333">57</text>
    </g>
  );
}

function RoutePin({ tile, x, y }) {
  return (
    <g transform={`translate(${px(tile, x)} ${py(y)})`}>
      <path d="M0,31C-1.4,22 -4.2,17 -9.5,11.5C-13.5,7.5 -15.6,4.5 -15.6,-.2A15.6,15.8 0 0 1 15.6,-.2C15.6,4.5 13.5,7.5 9.5,11.5C4.2,17 1.4,22 0,31Z" fill="#ea4335" stroke="#c5221f" strokeWidth=".9" />
      <circle r="6" fill="#b31412" />
    </g>
  );
}

function DelhiMap() {
  const at = (t) => `translate(${TILES[t]} -7) scale(${1 / 3})`;
  return (
    <MapArt viewBox="0 0 1380 375">
      <rect width="1380" height="375" fill="#f7f7f7" />
      {AREAS.map(([t, fill, d], i) => <path key={i} transform={at(t)} d={d} fill={fill} strokeLinejoin="round" />)}
      {LINES.map(([t, kind, d], i) => (
        <path key={i} transform={at(t)} d={d} fill="none" stroke={KINDS[kind][0]} strokeWidth={KINDS[kind][1]} strokeLinejoin="round" />
      ))}
      {LINES.filter(([, kind]) => kind === 'rail').map(([t, , d], i) => (
        <path key={i} transform={at(t)} d={d} fill="none" stroke="#d3d6da" strokeWidth="16" strokeDasharray="2 20" />
      ))}
      {HIGHWAYS.map(([t, d], i) => (
        <g key={i} transform={at(t)} fill="none" strokeLinejoin="round">
          <path d={d} stroke="#8b9cc2" strokeWidth="15" />
          <path d={d} stroke="#a8b7d7" strokeWidth="10" />
        </g>
      ))}
      <path transform={at('d')} d="M904,648L704,878 524,1146" stroke="#fff" strokeWidth="3" fill="none" />
      <path transform={at('a')} d="M1086,454L1000,540" stroke="#fff" strokeWidth="3" fill="none" />
      <path transform={at('b')} d="M0,490L120,380" stroke="#fff" strokeWidth="3" fill="none" />
      <path transform={at('d')} d={BORDERS} fill="none" stroke="#6d7074" strokeWidth="3.4" strokeDasharray="9 7" />
      <path transform={at('a')} d="M815,355L820,330 848,328 842,340 826,342 848,348 840,368 830,356Z" fill="#90daee" />
      {LABELS.map((item, i) => <Label key={i} item={item} />)}
      <path id="sahibi" d="M244.5,134.5C266,131 284,133 302,150" fill="none" />
      <MapLabel $size={11.5} $weight={400} $color={C.teal}>
        <textPath href="#sahibi" textLength="60">Sahibi River</textPath>
      </MapLabel>
      <MapLabel transform={`translate(${px('d', 672)} ${py(262)}) rotate(-70)`} textLength="46" $size={15.5} $weight={500} $color={C.area}>DELHI</MapLabel>
      <MapLabel transform={`translate(${px('d', 743)} ${py(434)}) rotate(-69.5)`} textLength="139" $size={15.5} $weight={500} $color={C.area}>UTTAR PRADESH</MapLabel>
      {SHIELDS.map((item, i) => <Shield key={i} item={item} />)}
      <StateRoute x={485} y={107} />
      <StateRoute x={1027} y={90} />
      {PINS.map(([tile, x, y, color, icon], i) => <PoiPin key={i} tile={tile} x={x} y={y} color={color} icon={icon} />)}
      <path transform={at('b')} d="M588,835L612,802 604,790 600,740 612,705 675,622 683,590 735,565 790,495 835,455 865,400 912,342 945,365 1120,487 1185,530 1190,522 1435,487 1503,517 1508,495 1523,470 1525,450 1519,420 1530,400" fill="none" stroke="#fe0000" strokeWidth="7" strokeLinejoin="round" />
      <RoutePin tile="b" x={588} y={742} />
      <RoutePin tile="c" x={510} y={315} />
    </MapArt>
  );
}

function Pegman() {
  return (
    <svg width="22" height="38" viewBox="0 0 22 38">
      <path d="M6.5,13.5H15.5L18.3,15 21,25.5 18.6,26.6 16.8,22.5 16.3,36.5H12L11,27 10,36.5H5.7L5.2,22.5 3.4,26.6 1,25.5 3.7,15Z" fill="#fbbc2c" stroke="#8b7a52" strokeWidth="1" strokeLinejoin="round" />
      <path d="M7,13.5H15L11,18.5Z" fill="#e2711d" />
      <circle cx="11" cy="7.5" r="6.3" fill="#fbbc2c" stroke="#8b7a52" strokeWidth="1" />
    </svg>
  );
}

const ROWS = [
  ['Distance:', '12.90 km'],
  ['Duration:', '38.30 minutes'],
  ['Emissions:', '3825.85 g CO2'],
  ['Weather:', '10.93°C, Wind: 3.09 km/h, Humidity: 66%'],
  ['Air Quality Index:', '158'],
  ['Package Weight:', '100 kg'],
];

const LOGO = [['G', '#4285f4'], ['o', '#ea4335'], ['o', '#fbbc05'], ['g', '#4285f4'], ['l', '#34a853'], ['e', '#ea4335']];

export default function App() {
  return (
    <>
      <GlobalStyle />
      <Page>
        <Panel>
          <RouteButton>Show Alternative Routes</RouteButton>
          <SectionTitle>Best Route</SectionTitle>
          <MapShadow>
            <MapFrame>
              <DelhiMap />
              <TypeSwitch>
                <TypeButton $width={87} $active>Map</TypeButton>
                <TypeButton $width={123} $divided>Satellite</TypeButton>
              </TypeSwitch>
              <ControlColumn>
                <SquareControl $gap={91} aria-label="Fullscreen">
                  <svg width="24" height="24" viewBox="0 0 24 24" fill="none" stroke="#666" strokeWidth="3">
                    <path d="M1.8 8.5V1.8H8.5M15.5 1.8H22.2V8.5M22.2 15.5V22.2H15.5M8.5 22.2H1.8V15.5" />
                  </svg>
                </SquareControl>
                <SquareControl $gap={40} aria-label="Street View"><Pegman /></SquareControl>
                <SquareControl $height={101} aria-label="Zoom">
                  <svg width="50" height="101" viewBox="0 0 50 101">
                    <path d="M14 25H37M25.5 13.5V36.5M14 76.5H37" stroke="#666" strokeWidth="4.6" fill="none" />
                    <path d="M6 50.5H44" stroke="#e6e6e6" strokeWidth="1" />
                  </svg>
                </SquareControl>
              </ControlColumn>
              <Logo>{LOGO.map(([ch, color], i) => <LogoLetter key={i} $color={color}>{ch}</LogoLetter>)}</Logo>
              <Attribution>
                <AttributionItem $width={108}>Keyboard shortcuts</AttributionItem>
                <AttributionItem $width={94}>Map data ©2025</AttributionItem>
                <AttributionItem $width={35}>Terms</AttributionItem>
                <AttributionItem $width={104}>Report a map error</AttributionItem>
              </Attribution>
            </MapFrame>
          </MapShadow>
          <Details>
            <DetailsTitle>
              Best route from 33/ Ramkumar Marg Jhandewala New Delhi 110055 Delhi IN phone 1800 22 6161<br />
              to C-152/ Industrial Area Phase II Mayapuri New Delhi, Delhi 110015
            </DetailsTitle>
            {ROWS.map(([name, value]) => (
              <DetailRow key={name}><strong>{name}</strong> {value}</DetailRow>
            ))}
          </Details>
        </Panel>
      </Page>
    </>
  );
}
